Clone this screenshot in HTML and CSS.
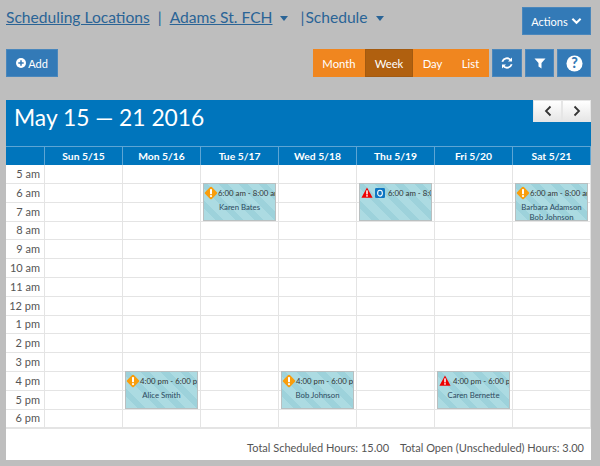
FILE: index.html
```html
<!DOCTYPE html>
<html lang="en">
<head>
<meta charset="utf-8">
<title>Schedule</title>
<link rel="stylesheet" href="styles.css">
</head>
<body>
<svg class="defs" width="0" height="0">
  <symbol id="warn" viewBox="0 0 14 14"><rect x="2.200" y="2.200" width="9.600" height="9.600" rx="1.200" transform="rotate(45 7 7)" fill="#f99d0c"/><rect x="6" y="3" width="2" height="5.200" rx=".6" fill="#fff"/><circle cx="7" cy="10.100" r="1.100" fill="#fff"/></symbol>
  <symbol id="alert" viewBox="0 0 14 13"><path d="M7 .5 13.600 12.600H.4Z" fill="#ee0000"/><rect x="6.100" y="4" width="1.800" height="4.800" fill="#fff"/><rect x="6.100" y="9.600" width="1.800" height="1.800" fill="#fff"/></symbol>
  <symbol id="outlook" viewBox="0 0 11 11"><rect width="11" height="11" rx="1.500" fill="#0f76c2"/><ellipse cx="5.500" cy="5.700" rx="2.600" ry="3.200" fill="none" stroke="#fff" stroke-width="1.200"/></symbol>
</svg>
<header class="top">
  <nav class="crumbs">
    <a class="crumb" href="#">Scheduling Locations</a>
    <span class="sep">|</span>
    <a class="crumb second" href="#">Adams St. FCH</a>
    <span class="caret"></span>
    <span class="sep thin">|</span>
    <span class="plain">Schedule</span>
    <span class="caret"></span>
  </nav>
  <button class="btn actions">Actions
    <svg class="chev" viewBox="0 0 12 8"><path d="M1.500 1.500 6 6l4.500-4.500" fill="none" stroke="#fff" stroke-width="2.200"/></svg>
  </button>
</header>
<section class="tools">
  <button class="btn add">
    <svg class="plus" viewBox="0 0 10 10"><circle cx="5" cy="5" r="5" fill="#fff"/><path d="M5 2.300v5.400M2.300 5h5.400" stroke="#337ab7" stroke-width="1.500"/></svg>Add
  </button>
  <div class="tool-right">
    <div class="views">
      <button class="view month">Month</button>
      <button class="view week">Week</button>
      <button class="view day">Day</button>
      <button class="view list">List</button>
    </div>
    <button class="btn icon refresh"><svg viewBox="0 0 12 12" class="ico"><path d="M1.300 4.700A4.900 4.900 0 0 1 9.700 3M10.700 7.300A4.900 4.900 0 0 1 2.300 9" fill="none" stroke="#fff" stroke-width="1.800"/><path d="M11 .6v4H7ZM1 11.400v-4h4Z" fill="#fff"/></svg></button>
    <button class="btn icon filter"><svg viewBox="0 0 12 12" class="ico"><path d="M.5 1.500h11L7.500 6v5.500L4.500 9.500V6Z" fill="#fff"/></svg></button>
    <button class="btn icon help"><svg viewBox="0 0 18 18" class="ico-big"><circle cx="9" cy="9" r="8.500" fill="#fff"/><text x="9" y="14" class="q">?</text></svg></button>
  </div>
</section>
<main class="calendar">
  <div class="cal-head">
    <h1 class="cal-title">May 15 — 21 2016</h1>
    <div class="pager">
      <button class="page"><svg viewBox="0 0 8 12" class="arrow"><path d="M6.500 1.500 2 6l4.500 4.500" fill="none" stroke="#333" stroke-width="1.800"/></svg></button>
      <button class="page"><svg viewBox="0 0 8 12" class="arrow"><path d="M1.500 1.500 6 6l-4.500 4.500" fill="none" stroke="#333" stroke-width="1.800"/></svg></button>
    </div>
  </div>
  <div class="days">
    <div class="dh"></div><div class="dh">Sun 5/15</div><div class="dh">Mon 5/16</div><div class="dh">Tue 5/17</div><div class="dh">Wed 5/18</div><div class="dh">Thu 5/19</div><div class="dh">Fri 5/20</div><div class="dh">Sat 5/21</div>
  </div>
  <div class="grid">
    <div class="row"><div class="time">5 am</div><div class="c"></div><div class="c"></div><div class="c"></div><div class="c"></div><div class="c"></div><div class="c"></div><div class="c"></div></div>
    <div class="row"><div class="time">6 am</div><div class="c"></div><div class="c"></div>
      <div class="c"><div class="event"><div class="ev-time"><svg class="i-warn"><use href="#warn"/></svg><span>6:00 am - 8:00 am</span></div><div class="ev-name">Karen Bates</div></div></div>
      <div class="c"></div>
      <div class="c"><div class="event"><div class="ev-time"><svg class="i-alert"><use href="#alert"/></svg><svg class="i-out"><use href="#outlook"/></svg><span>6:00 am - 8:00 am</span></div></div></div>
      <div class="c"></div>
      <div class="c"><div class="event"><div class="ev-time"><svg class="i-warn"><use href="#warn"/></svg><span>6:00 am - 8:00 am</span></div><div class="ev-name">Barbara Adamson</div><div class="ev-name">Bob Johnson</div></div></div>
    </div>
    <div class="row"><div class="time">7 am</div><div class="c"></div><div class="c"></div><div class="c"></div><div class="c"></div><div class="c"></div><div class="c"></div><div class="c"></div></div>
    <div class="row"><div class="time">8 am</div><div class="c"></div><div class="c"></div><div class="c"></div><div class="c"></div><div class="c"></div><div class="c"></div><div class="c"></div></div>
    <div class="row"><div class="time">9 am</div><div class="c"></div><div class="c"></div><div class="c"></div><div class="c"></div><div class="c"></div><div class="c"></div><div class="c"></div></div>
    <div class="row"><div class="time">10 am</div><div class="c"></div><div class="c"></div><div class="c"></div><div class="c"></div><div class="c"></div><div class="c"></div><div class="c"></div></div>
    <div class="row"><div class="time">11 am</div><div class="c"></div><div class="c"></div><div class="c"></div><div class="c"></div><div class="c"></div><div class="c"></div><div class="c"></div></div>
    <div class="row"><div class="time">12 pm</div><div class="c"></div><div class="c"></div><div class="c"></div><div class="c"></div><div class="c"></div><div class="c"></div><div class="c"></div></div>
    <div class="row"><div class="time">1 pm</div><div class="c"></div><div class="c"></div><div class="c"></div><div class="c"></div><div class="c"></div><div class="c"></div><div class="c"></div></div>
    <div class="row"><div class="time">2 pm</div><div class="c"></div><div class="c"></div><div class="c"></div><div class="c"></div><div class="c"></div><div class="c"></div><div class="c"></div></div>
    <div class="row"><div class="time">3 pm</div><div class="c"></div><div class="c"></div><div class="c"></div><div class="c"></div><div class="c"></div><div class="c"></div><div class="c"></div></div>
    <div class="row"><div class="time">4 pm</div><div class="c"></div>
      <div class="c"><div class="event"><div class="ev-time"><svg class="i-warn"><use href="#warn"/></svg><span>4:00 pm - 6:00 pm</span></div><div class="ev-name">Alice Smith</div></div></div>
      <div class="c"></div>
      <div class="c"><div class="event"><div class="ev-time"><svg class="i-warn"><use href="#warn"/></svg><span>4:00 pm - 6:00 pm</span></div><div class="ev-name">Bob Johnson</div></div></div>
      <div class="c"></div>
      <div class="c"><div class="event"><div class="ev-time"><svg class="i-alert"><use href="#alert"/></svg><span>4:00 pm - 6:00 pm</span></div><div class="ev-name">Caren Bernette</div></div></div>
      <div class="c"></div>
    </div>
    <div class="row"><div class="time">5 pm</div><div class="c"></div><div class="c"></div><div class="c"></div><div class="c"></div><div class="c"></div><div class="c"></div><div class="c"></div></div>
    <div class="row"><div class="time">6 pm</div><div class="c"></div><div class="c"></div><div class="c"></div><div class="c"></div><div class="c"></div><div class="c"></div><div class="c"></div></div>
  </div>
  <footer class="totals">
    <span>Total Scheduled Hours: 15.00</span>
    <span>Total Open (Unscheduled) Hours: 3.00</span>
  </footer>
</main>
</body>
</html>
```

FILE: styles.css
```css
* { box-sizing: border-box; }
html, body { margin: 0; height: 100%; }
body {
  background: #bebebe;
  font-family: Lato, "Open Sans", sans-serif;
  color: #555;
  padding: 0 9px 0 6px;
  overflow: hidden;
}
.defs { position: absolute; }
button { font-family: inherit; cursor: pointer; }
.top {
  height: 49px;
  display: flex;
  justify-content: space-between;
  align-items: flex-start;
}
.crumbs {
  display: flex;
  align-items: center;
  height: 34px;
  font-size: 15.600px;
  color: #2a6496;
  white-space: nowrap;
}
.crumb { color: #2a6496; text-decoration: underline; }
.sep { margin: 0 0 0 8px; }
.second { margin-left: 8px; }
.sep.thin { margin-left: 12px; margin-right: 1px; }
.plain { color: #2a6496; }
.caret {
  width: 0;
  height: 0;
  margin: 2px 0 0 8px;
  border: 4.500px solid transparent;
  border-top: 5px solid #2a6496;
  border-bottom: 0;
}
.btn {
  background: #337ab7;
  border: 1px solid #4a87bc;
  color: #fff;
  padding: 0;
  display: flex;
  align-items: center;
  justify-content: center;
}
.actions {
  margin-top: 7px;
  width: 69px;
  height: 28px;
  font-size: 11px;
  gap: 3px;
}
.chev { width: 11px; height: 8px; }
.tools {
  height: 51px;
  display: flex;
  justify-content: space-between;
  align-items: flex-start;
}
.add {
  width: 52px;
  height: 28px;
  font-size: 11px;
  gap: 2px;
}
.plus { width: 10px; height: 10px; }
.tool-right { display: flex; gap: 3px; }
.views { display: flex; background: #f0861f; height: 28px; }
.view {
  background: transparent;
  border: 0;
  color: #fff;
  font-size: 11.300px;
  padding: 0;
  height: 28px;
}
.month { width: 52px; }
.week { width: 48px; background: #b0600f; border: 1px solid #a35a10; }
.day { width: 39px; }
.list { width: 37px; }
.icon { height: 28px; width: 30px; }
.filter { width: 29px; }
.help { width: 34px; }
.ico { width: 12px; height: 12px; }
.ico-big { width: 17px; height: 17px; }
.q { font-size: 15px; font-weight: 900; text-anchor: middle; fill: #337ab7; }
.calendar { background: #fff; width: 585px; }
.cal-head {
  height: 46px;
  background: #0075bc;
  display: flex;
  justify-content: space-between;
  align-items: flex-start;
}
.cal-title {
  margin: 0;
  padding: 1px 0 0 8px;
  font-weight: 400;
  font-size: 22.800px;
  line-height: 32px;
  color: #fff;
}
.pager { display: flex; }
.page {
  width: 29px;
  height: 22px;
  padding: 0;
  border: 1px solid #e6e6e6;
  background: linear-gradient(#fff, #e6e6e6);
  display: flex;
  align-items: center;
  justify-content: center;
}
.arrow { width: 8px; height: 12px; }
.days {
  display: grid;
  grid-template-columns: 39px repeat(7, 78px);
  height: 19px;
  background: #0075bc;
}
.dh {
  border-right: 1px solid #5da5d4;
  border-top: 1px solid #5da5d4;
  color: #fff;
  font-size: 10.300px;
  font-weight: 700;
  line-height: 18px;
  text-align: center;
}
.row {
  display: grid;
  grid-template-columns: 39px repeat(7, 78px);
  height: 18.800px;
}
.time, .c {
  border-bottom: 1px solid #e4e4e4;
  border-right: 1px solid #e4e4e4;
}
.time {
  font-size: 11px;
  line-height: 18px;
  text-align: right;
  padding-right: 4px;
  color: #555;
}
.c { position: relative; }
.event {
  position: absolute;
  z-index: 1;
  top: -1px;
  left: 2px;
  width: 73px;
  height: 38.600px;
  overflow: hidden;
  border: 1px solid #b9bfc0;
  background: repeating-linear-gradient(45deg, #acdbe2 0 8px, #9dd2db 8px 14px);
  color: #2d4a5e;
  font-size: 7.800px;
  white-space: nowrap;
}
.ev-time { display: flex; align-items: center; height: 18px; color: #333; }
.i-warn { width: 14px; height: 14px; flex: none; }
.i-alert { width: 12px; height: 11px; margin: 0 2px 0 1px; flex: none; }
.i-out { width: 10px; height: 10px; margin-right: 3px; flex: none; }
.ev-name { text-align: center; line-height: 10px; }
.totals {
  height: 32px;
  display: flex;
  justify-content: flex-end;
  align-items: center;
  gap: 11px;
  padding: 6px 7px 0 0;
  font-size: 11px;
  color: #555;
  border-top: 1px solid #e4e4e4;
}
```
